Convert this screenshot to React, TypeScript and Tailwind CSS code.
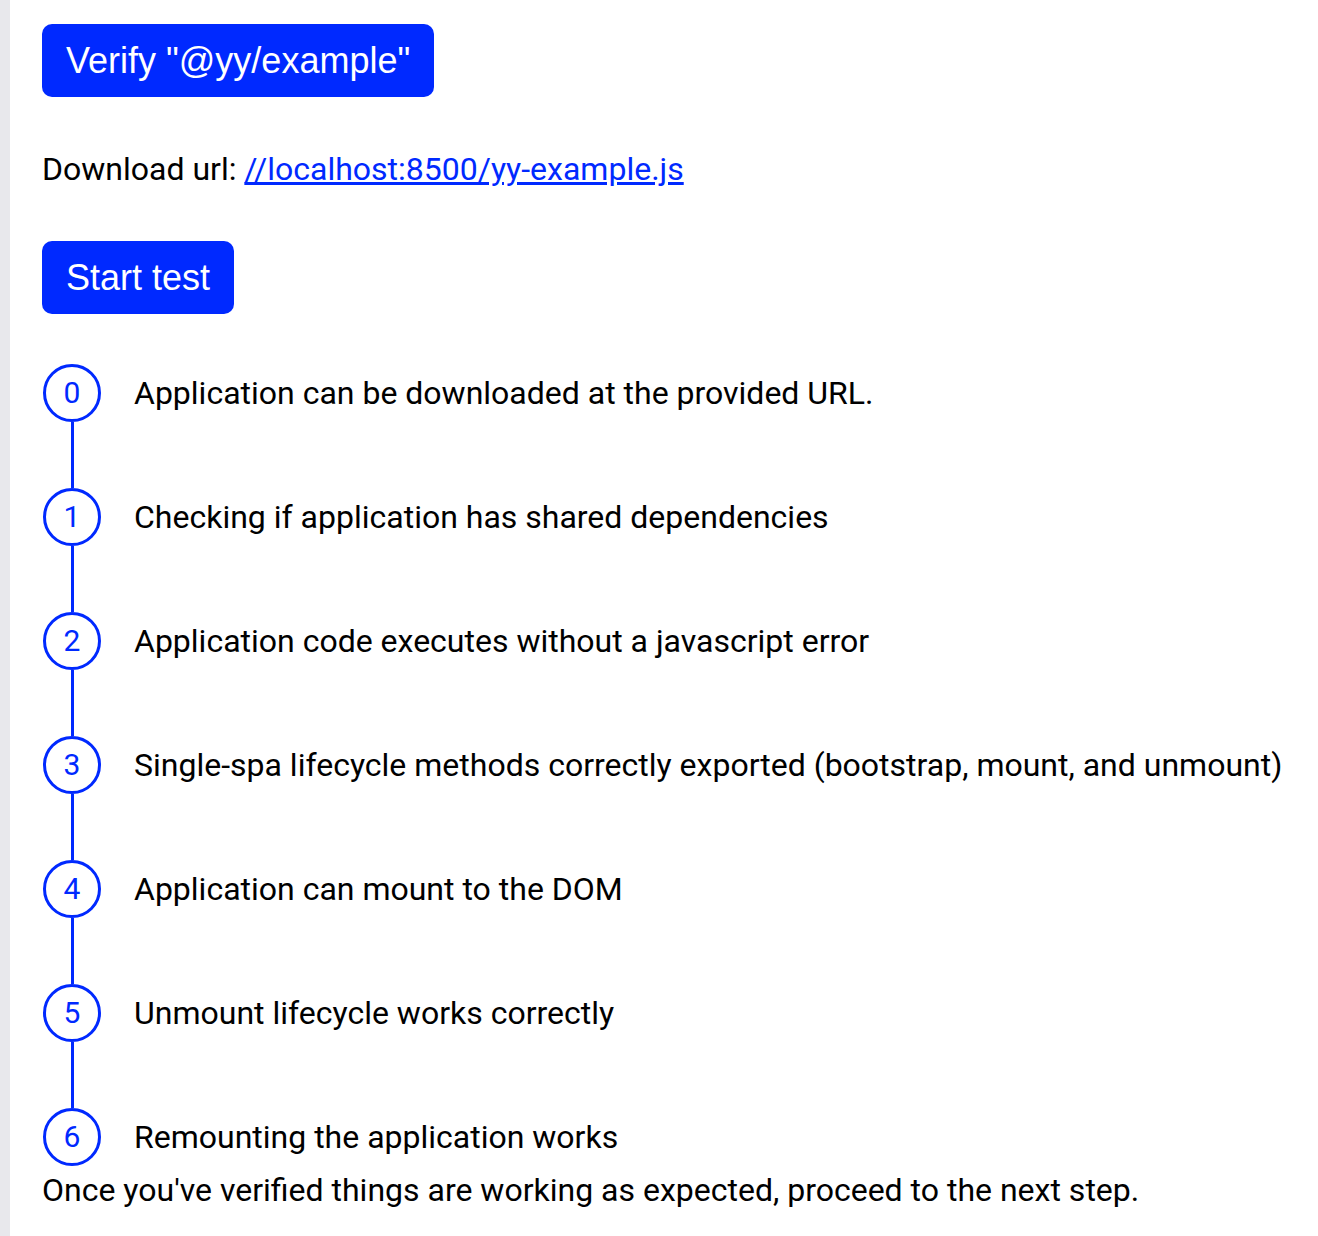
import React from 'react';

const steps = [
  'Application can be downloaded at the provided URL.',
  'Checking if application has shared dependencies',
  'Application code executes without a javascript error',
  'Single-spa lifecycle methods correctly exported (bootstrap, mount, and unmount)',
  'Application can mount to the DOM',
  'Unmount lifecycle works correctly',
  'Remounting the application works',
];

export default function App() {
  return (
    <div className="min-h-[1236px] flex bg-white text-black font-['Roboto',sans-serif]">
      <div className="w-[10px] shrink-0 bg-[#e8e8ec]" />
      <main className="flex-1 pl-[32px] pt-[24px]">
        <button className="h-[73px] px-[24px] rounded-[10px] bg-[#0029ff] text-white text-[36px] font-['Liberation_Sans',Arial,sans-serif] leading-none">
          Verify "@yy/example"
        </button>

        <p className="mt-[54px] text-[32px] leading-[37px]">
          Download url:{' '}
          <a href="#" className="text-[#0029ff] underline">
            //localhost:8500/yy-example.js
          </a>
        </p>

        <button className="mt-[53px] h-[73px] px-[24px] rounded-[10px] bg-[#0029ff] text-white text-[36px] font-['Liberation_Sans',Arial,sans-serif] leading-none">
          Start test
        </button>

        <ol className="mt-[50px] flex flex-col">
          {steps.map((step, i) => (
            <li key={step} className="flex flex-col">
              <div className="flex items-center">
                <div className="ml-[1px] w-[58px] h-[58px] shrink-0 rounded-full border-[3.5px] border-[#0029ff] flex items-center justify-center text-[#0029ff] text-[30px] leading-none">
                  {i}
                </div>
                <span className="ml-[33px] text-[32px] leading-[37px]">{step}</span>
              </div>
              {i < steps.length - 1 && (
                <div className="ml-[29px] w-[3px] h-[66px] bg-[#0029ff]" />
              )}
            </li>
          ))}
        </ol>

        <p className="mt-[6px] text-[32px] leading-[37px]">
          Once you've verified things are working as expected, proceed to the next step.
        </p>
      </main>
    </div>
  );
}
